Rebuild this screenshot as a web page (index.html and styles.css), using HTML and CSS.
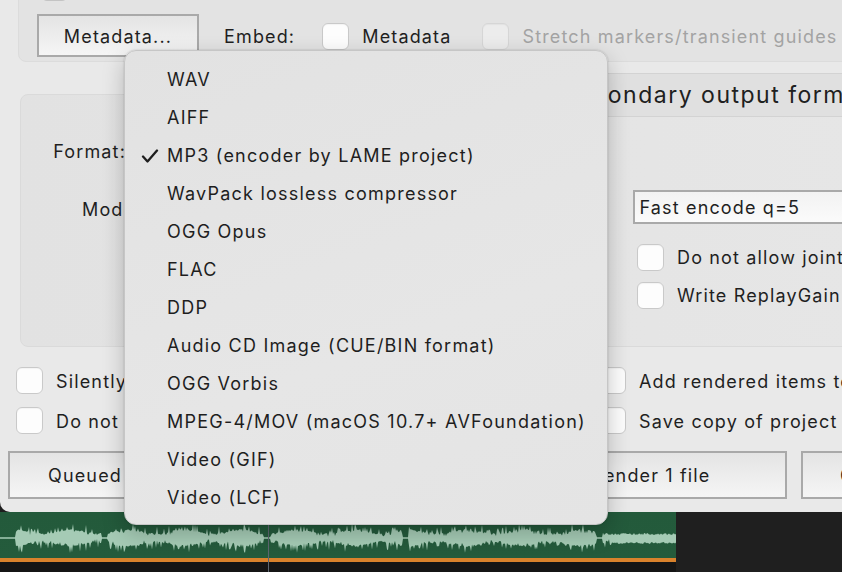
FILE: index.html
```html
<!DOCTYPE html>
<html>
<head>
<meta charset="utf-8">
<link rel="stylesheet" href="styles.css">
</head>
<body>
<div class="screen">
  <div class="dialog">
    <div class="meta-group">
      <div class="peek-row"><span class="cb peek"></span></div>
      <div class="meta-row">
        <div class="btn meta-btn">Metadata...</div>
        <span class="lbl embed">Embed:</span>
        <span class="cb"></span>
        <span class="lbl cb-text">Metadata</span>
        <span class="cb disabled stretch-cb"></span>
        <span class="lbl cb-text dim">Stretch markers/transient guides</span>
      </div>
    </div>

    <div class="format-group">
      <div class="tab-head"><span class="tab-text">Secondary output format</span></div>
      <div class="row format-row">
        <span class="lbl format-lbl">Format:</span>
      </div>
      <div class="row mode-row">
        <span class="lbl mode-lbl">Mode:</span>
        <div class="select fast-sel">Fast encode q=5</div>
      </div>
      <div class="opt-row">
        <span class="cb"></span><span class="lbl cb-text">Do not allow joint stereo</span>
      </div>
      <div class="opt-row">
        <span class="cb"></span><span class="lbl cb-text">Write ReplayGain tag</span>
      </div>
    </div>

    <div class="opts">
      <div class="opt-line">
        <div class="opt-cell"><span class="cb"></span><span class="lbl cb-text">Silently increment filenames</span></div>
        <div class="opt-cell right"><span class="cb"></span><span class="lbl cb-text">Add rendered items to new tracks</span></div>
      </div>
      <div class="opt-line">
        <div class="opt-cell"><span class="cb"></span><span class="lbl cb-text">Do not render silent files</span></div>
        <div class="opt-cell right"><span class="cb"></span><span class="lbl cb-text">Save copy of project to outfile</span></div>
      </div>
    </div>

    <div class="buttons">
      <div class="btn queued">Queued renders</div>
      <div class="btn mid">Dry run</div>
      <div class="btn render">Render 1 file</div>
      <div class="btn cancel">Cancel</div>
    </div>
  </div>

  <div class="track">
    <div class="lane">
      <svg class="wave" width="676" height="46" viewBox="0 0 676 46"><path id="wavepath" d=""/></svg>
      <div class="cursor"></div>
    </div>
    <div class="lane-empty"></div>
  </div>

  <div class="menu">
    <div class="item">WAV</div>
    <div class="item">AIFF</div>
    <div class="item checked"><svg class="check" width="18" height="14" viewBox="0 0 18 14"><path d="M2 7.5 L6.5 12.5 L16 1.5"/></svg>MP3 (encoder by LAME project)</div>
    <div class="item">WavPack lossless compressor</div>
    <div class="item">OGG Opus</div>
    <div class="item">FLAC</div>
    <div class="item">DDP</div>
    <div class="item">Audio CD Image (CUE/BIN format)</div>
    <div class="item">OGG Vorbis</div>
    <div class="item">MPEG-4/MOV (macOS 10.7+ AVFoundation)</div>
    <div class="item">Video (GIF)</div>
    <div class="item">Video (LCF)</div>
  </div>
</div>
<script src="script.js"></script>
</body>
</html>
```
FILE: styles.css
```css
* { box-sizing: border-box; }
html, body { margin: 0; padding: 0; }
body {
  width: 842px; height: 572px; overflow: hidden;
  background: #1e1e1e;
  font-family: "Inter", "Noto Sans", sans-serif;
  font-size: 18px; letter-spacing: 1.15px; color: #1f1f1f;
}
.screen { position: relative; width: 842px; height: 572px; overflow: hidden; }

.dialog {
  height: 512px;
  background: #e9e9e9;
  border-bottom-left-radius: 10px;
  overflow: hidden;
  display: flex; flex-direction: column;
}

.lbl { white-space: nowrap; line-height: 22px; }
.dim { color: #a3a3a3; }

.cb {
  flex: none;
  width: 27px; height: 27px;
  background: #fdfdfd;
  border: 1px solid #c9c9c9;
  border-radius: 6px;
  box-shadow: inset 0 1px 1px rgba(0,0,0,0.04);
}
.cb.disabled { background: #ececec; border-color: #d6d6d6; }

.btn {
  flex: none;
  border: 2px solid #a9a9a9;
  background: linear-gradient(#e4e4e4, #f5f5f5);
  display: flex; align-items: center;
  white-space: nowrap;
}

/* top group */
.meta-group {
  flex: none;
  margin: -30px -20px 0 18px;
  height: 92px;
  background: #e3e3e3;
  border: 1px solid #dcdcdc;
  border-radius: 0 0 8px 8px;
  padding: 3px 0 0 18px;
}
.peek-row { height: 27px; padding-left: 4px; }
.peek { display: block; background: #cfcfcf; border-color: #c4c4c4; }
.meta-row { margin-top: 13px; display: flex; align-items: center; height: 43px; }
.meta-btn { width: 162px; height: 43px; justify-content: center; padding-top: 2px; }
.meta-row .lbl { padding-top: 3px; }
.embed { margin-left: 25px; }
.meta-row .cb { margin-left: 27px; margin-top: 2px; }
.meta-row .cb-text { margin-left: 13px; }
.meta-row .stretch-cb { margin-left: 31px; }

/* format group */
.format-group {
  flex: none;
  position: relative;
  margin: 32px -20px 0 20px;
  height: 253px;
  background: linear-gradient(90deg, #e2e2e2, #e6e6e6);
  border: 1px solid #dadada;
  border-radius: 8px 0 0 8px;
}
.tab-head {
  position: absolute; top: -22px; left: 420px; right: 0;
  height: 44px;
  background: #e0e0e0;
  border-top: 1px solid #d3d3d3;
  border-bottom: 1px solid #d3d3d3;
  display: flex; align-items: center;
  padding-left: 121px;
  overflow: hidden;
}
.tab-text { font-size: 23px; letter-spacing: 1.5px; white-space: nowrap; color: #202020; padding-bottom: 1px; }
.row { display: flex; align-items: center; height: 34px; }
.format-row { margin-top: 40px; }
.format-lbl { width: 105px; text-align: right; }
.mode-row { margin-top: 21px; }
.mode-lbl { margin-left: 61px; padding-top: 6px; }
.select {
  flex: none;
  border: 2px solid #a9a9a9;
  background: linear-gradient(#f2f2f2, #fbfbfb);
  height: 34px; display: flex; align-items: center;
  padding-left: 5px; white-space: nowrap;
}
.fast-sel { margin-left: 491px; width: 240px; }
.opt-row { display: flex; align-items: center; height: 27px; margin-left: 616px; }
.mode-row + .opt-row { margin-top: 20px; }
.opt-row + .opt-row { margin-top: 11px; }
.opt-row .cb-text { margin-left: 13px; }

/* bottom options */
.opts { flex: none; margin-top: 20px; padding-left: 16px; display: flex; flex-direction: column; gap: 13px; }
.opt-line { display: flex; height: 27px; }
.opt-cell { flex: none; display: flex; align-items: center; width: 583px; overflow: hidden; }
.opt-cell.right { width: 300px; }
.opt-cell .cb-text { margin-left: 13px; padding-top: 2px; }

.buttons { flex: none; margin-top: 17px; padding-left: 8px; display: flex; gap: 14px; height: 48px; }
.buttons .btn { height: 48px; padding-top: 1px; }
.queued { width: 250px; padding-left: 38px; }
.mid { width: 235px; justify-content: center; }
.render { width: 266px; justify-content: center; padding-right: 6px; }
.cancel { width: 160px; padding-left: 37px; }

/* track */
.track { display: flex; height: 60px; }
.lane {
  position: relative;
  flex: none;
  width: 676px; height: 60px;
  background: linear-gradient(#235a3b 0, #245b3c 46px, #d9822c 46px, #d9822c 50px, #151515 50px);
}
.wave { display: block; }
.wave path { fill: #a5cbb5; }
.cursor { position: absolute; left: 268px; top: 0; bottom: 0; width: 1px; background: #5d6670; }
.lane-empty { flex: 1; background: #1f1f1f; }

/* dropdown menu */
.menu {
  position: absolute; left: 124px; top: 50px;
  width: 484px; height: 475px;
  padding: 10px 0 9px;
  background: linear-gradient(160deg, #e2e2e2, #e6e6e6 60%, #e4e4e4);
  border: 1px solid #c6c6c6;
  border-radius: 12px;
  box-shadow: 0 8px 22px rgba(0,0,0,0.22), 0 0 2px rgba(0,0,0,0.2);
}
.item {
  position: relative;
  height: 38px; line-height: 38px;
  padding-left: 42px;
  white-space: nowrap; color: #1e1e1e;
  letter-spacing: 1.22px;
}
.check { position: absolute; left: 16px; top: 12px; }
.check path { fill: none; stroke: #1e1e1e; stroke-width: 2.3; stroke-linecap: round; stroke-linejoin: round; }
```
FILE: script.js
```js
(function () {
  var seed = 987;
  function rnd() { seed = (seed * 16807) % 2147483647; return seed / 2147483647; }
  var W = 676, C = 26;
  var quiet = [[0, 15], [102, 107], [264, 270], [403, 408], [597, 602]];
  var top = [], bot = [];
  for (var x = 0; x <= W; x += 1) {
    var base = 5 + 2 * Math.sin(x / 9) + rnd() * 2;
    var t = base, b = base;
    if (rnd() < 0.22) t += 2 + rnd() * 5;
    if (rnd() < 0.22) b += 2 + rnd() * 5;
    if (rnd() < 0.15) t -= 2;
    if (rnd() < 0.15) b -= 2;
    if (x > 612) { t = 3 + rnd() * 2; b = 4 + rnd() * 2; }
    for (var i = 0; i < quiet.length; i++) {
      if (x >= quiet[i][0] && x <= quiet[i][1]) { t = 0.8; b = 0.8; }
    }
    top.push(x + ',' + (C - Math.max(t, 0.8)).toFixed(1));
    bot.push(x + ',' + (C + Math.max(b, 0.8)).toFixed(1));
  }
  var d = 'M' + top.join(' L') + ' L' + bot.reverse().join(' L') + ' Z';
  document.getElementById('wavepath').setAttribute('d', d);
})();
```
